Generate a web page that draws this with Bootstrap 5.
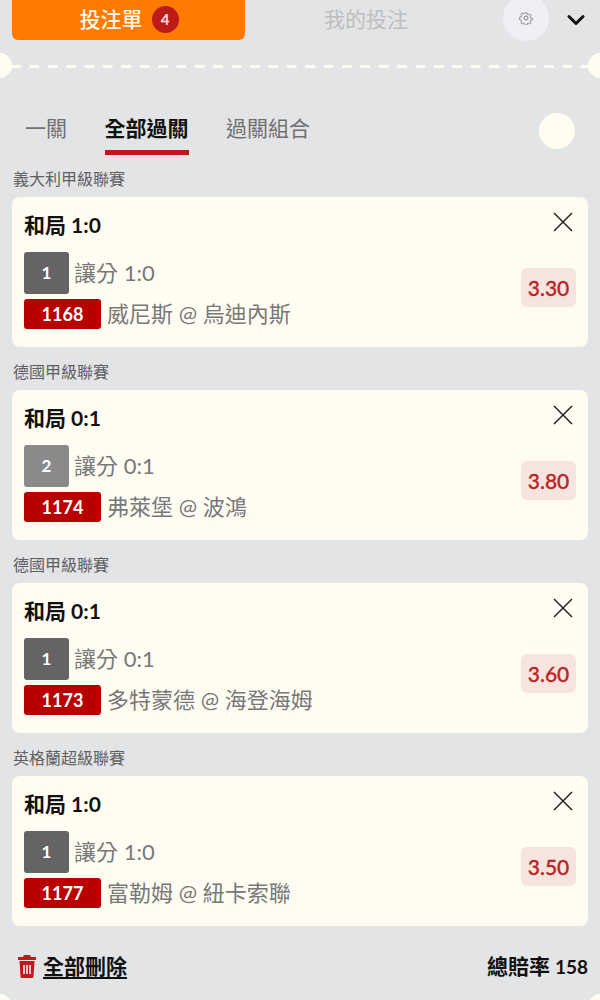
<!DOCTYPE html>
<html lang="zh-Hant">
<head>
<meta charset="utf-8">
<title>投注單</title>
<link href="https://cdn.jsdelivr.net/npm/bootstrap@5.3.0/dist/css/bootstrap.min.css" rel="stylesheet">
<style>
html,body{height:1000px;overflow:hidden}
body{background:#e3e4e6;font-family:Lato,"Noto Sans CJK TC",sans-serif;color:#111;position:relative}
.topbar{height:40px;padding:0 12px;position:relative}
.slip-tab{width:233px;height:40px;background:#ff7a00;color:#fff8ec;border-radius:0 0 6px 6px;font-size:21px;font-weight:500;gap:9px;padding:0 0 2px 1px}
.count-dot{width:27px;height:27px;border-radius:50%;background:#bd1a1a;color:#fbe7df;font-size:15px;font-weight:700}
.mine-tab{width:242px;font-size:21px;color:#bdbec0;height:40px;padding-bottom:3px}
.gear-btn{width:46px;height:46px;border-radius:50%;background:#eff0f3;margin-top:-5px;margin-left:16px}
.chev{margin-left:18px;margin-top:14px}
.tear{height:3px;margin-top:25px;position:relative;background:repeating-linear-gradient(90deg,#fffdf2 0 10px,transparent 10px 18.4px);background-position:11px 0;background-size:18.4px 3px}
.notch{position:absolute;top:-12px;width:25px;height:25px;border-radius:50%;background:#fffdf2}
.notch-l{left:-13px}.notch-r{right:-13px}
.bet-tabs{padding:0 24px 0 25px;margin-top:39px;height:48px;position:relative}
.bet-tab{font-size:21px;color:#6f7072;margin-right:37.500px;height:48px;line-height:30px;padding-top:6px}
.bet-tab.is-on{color:#111;font-weight:700;border-bottom:5px solid #c0161c}
.round-blank{position:absolute;right:25px;top:6px;width:36px;height:36px;border-radius:50%;background:#fffdf2}
.league{font-size:16px;color:#5f6062;height:20px;line-height:20px;margin:15px 0 8px 13px}
.league-first{margin-top:14px}
.leg{margin:0 12px;height:150px;background:#fffdf2;border-radius:8px;padding:14px 12px 0 12px;position:relative}
.leg-title{font-size:21px;font-weight:700;line-height:28px;height:28px;color:#111}
.leg-x{position:absolute;right:15px;top:15px}
.rank-row{margin-top:13px}
.rank{width:45px;height:42px;border-radius:3px;color:#fff;font-size:17px;font-weight:700;background:#646464}
.rank-two{background:#8a8a8a}
.market{font-size:22px;color:#77787a;margin-left:5px;padding-bottom:2px}
.match-line{margin-top:5px;height:30px}
.code{width:77px;height:30px;background:#b80000;color:#fff;border-radius:3px;font-size:18px;font-weight:700}
.teams{font-size:22px;color:#77787a;margin-left:6px;white-space:nowrap;padding-bottom:2px}
.odds{position:absolute;right:12px;top:71px;width:55px;height:39px;background:#f6e5df;border-radius:6px;color:#bc2327;font-size:21px;font-weight:500;-webkit-text-stroke:.3px #bc2327}
.foot{padding:0 12px 0 17px;margin-top:22px;height:36px}
.del-all{font-size:21px;font-weight:700;color:#111;text-decoration:underline;text-underline-offset:3px;margin-left:6px}
.total{font-size:21px;font-weight:700;color:#111}
.total span{font-size:19px;margin-left:5px}
.edge{position:absolute;top:994px;width:25px;height:25px;border-radius:50%;background:#fffdf2}
.edge-l{left:-13px}.edge-r{right:-13px}
</style>
</head>
<body>
<div class="topbar d-flex align-items-start">
  <div class="slip-tab d-flex align-items-center justify-content-center">投注單<span class="count-dot d-flex align-items-center justify-content-center">4</span></div>
  <div class="mine-tab d-flex align-items-center justify-content-center">我的投注</div>
  <div class="gear-btn d-flex align-items-center justify-content-center">
    <svg width="14" height="14" viewBox="0 0 24 24" fill="none" stroke="#77787a" stroke-width="1.600"><circle cx="12" cy="12" r="3.400"/><path d="M10.200 2h3.600l.6 3 2.300 1 2.600-1.600 2.500 2.500-1.600 2.600 1 2.300 3 .6v3.200l-3 .7-1 2.200 1.600 2.700-2.500 2.500-2.600-1.600-2.300 1-.6 2.900h-3.600l-.6-2.900-2.300-1-2.600 1.600-2.500-2.500 1.600-2.700-1-2.200-3-.7V10.400l3-.6 1-2.300-1.600-2.600 2.500-2.500 2.600 1.600 2.300-1z" transform="translate(1.300 1.300) scale(.89)"/></svg>
  </div>
  <svg class="chev" width="18" height="12" viewBox="0 0 18 12" fill="none" stroke="#111" stroke-width="3" stroke-linecap="round" stroke-linejoin="round"><path d="M2 2.500l7 7 7-7"/></svg>
</div>
<div class="tear"><span class="notch notch-l"></span><span class="notch notch-r"></span></div>
<div class="bet-tabs d-flex">
  <div class="bet-tab">一關</div>
  <div class="bet-tab is-on">全部過關</div>
  <div class="bet-tab">過關組合</div>
  <span class="round-blank"></span>
</div>

<div class="league league-first">義大利甲級聯賽</div>
<div class="leg">
  <div class="leg-title">和局 1:0</div>
  <svg class="leg-x" width="20" height="20" viewBox="0 0 20 20" stroke="#222" stroke-width="1.500"><path d="M1 1l18 18M19 1L1 19"/></svg>
  <div class="d-flex align-items-center rank-row"><span class="rank d-flex align-items-center justify-content-center">1</span><span class="market">讓分 1:0</span></div>
  <div class="match-line d-flex align-items-center"><span class="code d-flex align-items-center justify-content-center">1168</span><span class="teams">威尼斯 @ 烏迪內斯</span></div>
  <div class="odds d-flex align-items-center justify-content-center">3.30</div>
</div>

<div class="league">德國甲級聯賽</div>
<div class="leg">
  <div class="leg-title">和局 0:1</div>
  <svg class="leg-x" width="20" height="20" viewBox="0 0 20 20" stroke="#222" stroke-width="1.500"><path d="M1 1l18 18M19 1L1 19"/></svg>
  <div class="d-flex align-items-center rank-row"><span class="rank rank-two d-flex align-items-center justify-content-center">2</span><span class="market">讓分 0:1</span></div>
  <div class="match-line d-flex align-items-center"><span class="code d-flex align-items-center justify-content-center">1174</span><span class="teams">弗萊堡 @ 波鴻</span></div>
  <div class="odds d-flex align-items-center justify-content-center">3.80</div>
</div>

<div class="league">德國甲級聯賽</div>
<div class="leg">
  <div class="leg-title">和局 0:1</div>
  <svg class="leg-x" width="20" height="20" viewBox="0 0 20 20" stroke="#222" stroke-width="1.500"><path d="M1 1l18 18M19 1L1 19"/></svg>
  <div class="d-flex align-items-center rank-row"><span class="rank d-flex align-items-center justify-content-center">1</span><span class="market">讓分 0:1</span></div>
  <div class="match-line d-flex align-items-center"><span class="code d-flex align-items-center justify-content-center">1173</span><span class="teams">多特蒙德 @ 海登海姆</span></div>
  <div class="odds d-flex align-items-center justify-content-center">3.60</div>
</div>

<div class="league">英格蘭超級聯賽</div>
<div class="leg">
  <div class="leg-title">和局 1:0</div>
  <svg class="leg-x" width="20" height="20" viewBox="0 0 20 20" stroke="#222" stroke-width="1.500"><path d="M1 1l18 18M19 1L1 19"/></svg>
  <div class="d-flex align-items-center rank-row"><span class="rank d-flex align-items-center justify-content-center">1</span><span class="market">讓分 1:0</span></div>
  <div class="match-line d-flex align-items-center"><span class="code d-flex align-items-center justify-content-center">1177</span><span class="teams">富勒姆 @ 紐卡索聯</span></div>
  <div class="odds d-flex align-items-center justify-content-center">3.50</div>
</div>

<div class="foot d-flex align-items-center justify-content-between">
  <div class="d-flex align-items-center">
    <svg width="20" height="24" viewBox="0 0 20 24"><path fill="#c4161c" d="M7 1h6l1 2h5v3H1V3h5zM2.500 7h15l-1 15.500a1.500 1.500 0 0 1-1.500 1.500H5a1.500 1.500 0 0 1-1.500-1.500z"/><path stroke="#fff" stroke-width="1.500" d="M7 11v9M10 11v9M13 11v9"/></svg>
    <span class="del-all">全部刪除</span>
  </div>
  <div class="total">總賠率<span>158</span></div>
</div>
<span class="edge edge-l"></span><span class="edge edge-r"></span>
</body>
</html>
